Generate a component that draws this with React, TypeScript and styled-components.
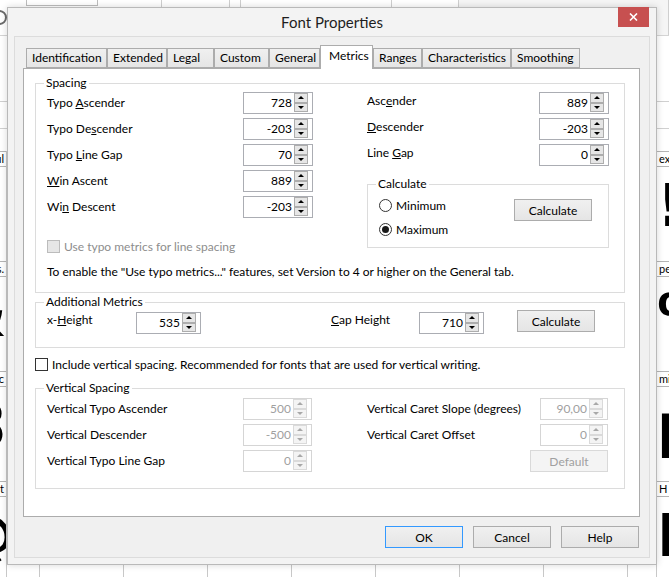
import React from 'react';
import styled, { createGlobalStyle } from 'styled-components';

const UI_FONT = 'Lato, "Noto Sans", "Liberation Sans", sans-serif';

const GlobalStyle = createGlobalStyle`
  html, body { margin: 0; padding: 0; background: #fff; }
  body { font-family: ${UI_FONT}; font-size: 12px; color: #000; }
  *, *::before, *::after { box-sizing: border-box; }
`;

/* ---------- host application behind the dialog ---------- */

const Desktop = styled.div`
  position: relative;
  width: 669px;
  height: 577px;
  overflow: hidden;
  background: #fff;
`;

const HostApp = styled.div`
  display: flex;
  flex-direction: column;
  height: 100%;
`;

const HostToolbar = styled.div`
  display: flex;
  flex: none;
  height: 36px;
  border-bottom: 1px solid #d4d4d4;
`;

const ToolSegment = styled.div<{ $w?: number; $shaded?: boolean }>`
  ${(p) => (p.$w ? `width: ${p.$w}px; flex: none;` : 'flex: 1;')}
  display: flex;
  align-items: flex-start;
  border-right: 1px solid #cfcfcf;
  background: ${(p) => (p.$shaded ? '#f5f5f5' : '#fff')};
`;

const RoundTool = styled.span`
  width: 15px;
  height: 15px;
  margin: 10px 0 0 -8px;
  border: 2px solid #6b6b6b;
  border-radius: 50%;
`;

const SearchBox = styled.span`
  width: 72px;
  height: 6px;
  margin-left: 19px;
  border: 1px solid #bdbdbd;
  border-top: none;
`;

const FilterBand = styled.div`
  flex: none;
  height: 115px;
  padding-top: 65px;
`;

const FilterRow = styled.div`
  height: 28px;
  border-top: 1px solid #d0d0d0;
  border-bottom: 1px solid #d0d0d0;
`;

const GlyphGrid = styled.div`
  display: grid;
  grid-template-columns: 51px 33px repeat(7, 84px) 29px 60px;
  grid-auto-rows: 110px;
  margin-left: -44px;
`;

type Align = 'left' | 'center' | 'right';

const GlyphCell = styled.div`
  display: flex;
  flex-direction: column;
  border-right: 1px solid #c8c8c8;
  overflow: hidden;
`;

const CellLabel = styled.div<{ $align: Align }>`
  height: 16px;
  padding: 0 2px;
  border-top: 1px solid #b5b5b5;
  border-bottom: 1px solid #b5b5b5;
  font-size: 11px;
  line-height: 14px;
  white-space: nowrap;
  overflow: hidden;
  text-align: ${(p) => p.$align};
`;

const GlyphArt = styled.div<{ $align: Align }>`
  padding-top: 10px;
  font-family: 'DejaVu Sans', sans-serif;
  font-weight: 700;
  font-size: 58px;
  line-height: 1;
  white-space: nowrap;
  text-align: ${(p) => p.$align};
`;

// only the outer columns peek out from behind the dialog
const GLYPH_ROWS: { left: [string, string]; right: [string, string] }[] = [
  { left: ['ul', ''], right: ['exclam', '!'] },
  { left: ['chars.', '&'], right: ['percent', '%'] },
  { left: ['sec', '8'], right: ['micro', 'µ'] },
  { left: ['t', '@'], right: ['H', 'H'] },
];

const GRID_COLUMNS = 11;

const HostBackdrop = () => (
  <HostApp>
    <HostToolbar>
      <ToolSegment $w={162}>
        <RoundTool />
        <SearchBox />
      </ToolSegment>
      <ToolSegment $w={68} />
      <ToolSegment $w={11} />
      <ToolSegment $w={151} />
      <ToolSegment $w={67} />
      <ToolSegment $shaded />
    </HostToolbar>
    <FilterBand>
      <FilterRow />
    </FilterBand>
    <GlyphGrid>
      {GLYPH_ROWS.map((row, r) =>
        Array.from({ length: GRID_COLUMNS }, (_, c) => {
          const cell = c === 0 ? row.left : c === GRID_COLUMNS - 1 ? row.right : ['', ''];
          const align: Align = c === 0 ? 'right' : c === GRID_COLUMNS - 1 ? 'left' : 'center';
          return (
            <GlyphCell key={`${r}-${c}`}>
              <CellLabel $align={align}>{cell[0]}</CellLabel>
              <GlyphArt $align={align}>{cell[1]}</GlyphArt>
            </GlyphCell>
          );
        }),
      )}
    </GlyphGrid>
  </HostApp>
);

/* ---------- dialog window ---------- */

const DialogWindow = styled.section`
  position: absolute;
  left: 7px;
  top: 7px;
  width: 650px;
  height: 558px;
  display: flex;
  flex-direction: column;
  background: #f3f3f3;
  border: 1px solid #b9b9b9;
  box-shadow: 0 0 7px rgba(0, 0, 0, 0.16);
`;

const TitleBar = styled.header`
  flex: none;
  height: 28px;
  display: grid;
  grid-template-columns: 1fr auto 1fr;
  align-items: start;
`;

const Title = styled.h1`
  grid-column: 2;
  margin: 0;
  font-size: 15px;
  font-weight: 400;
  line-height: 28px;
  color: #1e1e1e;
`;

const CloseButton = styled.button`
  grid-column: 3;
  justify-self: end;
  width: 31px;
  height: 20px;
  margin: -1px 7px 0 0;
  padding: 0;
  border: 0;
  display: flex;
  align-items: center;
  justify-content: center;
  background: #c75050;
`;

const ClientArea = styled.div`
  flex: 1;
  display: flex;
  flex-direction: column;
  margin: 0 6px 6px 6px;
  padding: 8px 9px 9px 8px;
  border: 1px solid #dcdcdc;
  background: #f0f0f0;
`;

const TabStrip = styled.div`
  flex: none;
  height: 23px;
  display: flex;
  align-items: flex-end;
  padding-left: 3px;
`;

const Tab = styled.div<{ $w: number; $active?: boolean }>`
  position: relative;
  width: ${(p) => p.$w}px;
  height: ${(p) => (p.$active ? 24 : 20)}px;
  margin-bottom: ${(p) => (p.$active ? -1 : 0)}px;
  z-index: ${(p) => (p.$active ? 1 : 0)};
  padding: ${(p) => (p.$active ? '2px 0 0 8px' : '1px 0 0 5px')};
  border: 1px solid #acacac;
  border-bottom: ${(p) => (p.$active ? 'none' : '1px solid #acacac')};
  background: ${(p) => (p.$active ? '#fff' : 'linear-gradient(#f0f0f0, #e5e5e5)')};
  line-height: 16px;
  white-space: nowrap;
`;

const TabPanel = styled.div`
  flex: 1;
  display: flex;
  flex-direction: column;
  align-items: flex-start;
  padding: 6px 0 0 11px;
  border: 1px solid #acacac;
  background: #fff;
`;

const GroupBox = styled.fieldset<{ $w: number; $gapTop?: number }>`
  width: ${(p) => p.$w}px;
  min-inline-size: 0;
  margin: ${(p) => p.$gapTop ?? 0}px 0 0 0;
  padding: 0;
  border: 1px solid #dcdcdc;
`;

const GroupTitle = styled.legend`
  margin-left: 8px;
  padding: 0 2px;
  line-height: 16px;
`;

const SpacingBody = styled.div`
  padding: 1px 15px 12px 11px;
`;

const SpacingColumns = styled.div`
  display: grid;
  grid-template-columns: 266px 242px;
  column-gap: 54px;
  align-items: start;
`;

const FieldColumn = styled.div`
  display: flex;
  flex-direction: column;
  gap: 4px;
`;

const MetricRow = styled.div<{ $raised?: boolean }>`
  height: 22px;
  display: flex;
  align-items: ${(p) => (p.$raised ? 'flex-start' : 'center')};
  justify-content: space-between;
`;

const MetricLabel = styled.span<{ $raised?: boolean }>`
  line-height: 16px;
  margin-top: ${(p) => (p.$raised ? 1 : 0)}px;
`;

const Note = styled.p`
  margin: 11px 0 0;
  line-height: 16px;
`;

const CheckRow = styled.label<{ $gapTop: number; $disabled?: boolean }>`
  display: flex;
  align-items: center;
  gap: 4px;
  height: 13px;
  margin-top: ${(p) => p.$gapTop}px;
  color: ${(p) => (p.$disabled ? '#8d8d8d' : '#000')};
  white-space: nowrap;
`;

const CheckSquare = styled.span<{ $disabled?: boolean }>`
  flex: none;
  width: 13px;
  height: 13px;
  border: 1px solid ${(p) => (p.$disabled ? '#bcbcbc' : '#333')};
  background: ${(p) => (p.$disabled ? '#e6e6e6' : '#fff')};
`;

const CalcBody = styled.div`
  display: flex;
  justify-content: space-between;
  align-items: flex-start;
  padding: 5px 16px 10px 11px;
`;

const RadioList = styled.div`
  display: flex;
  flex-direction: column;
  gap: 8px;
`;

const RadioRow = styled.label`
  display: flex;
  align-items: center;
  gap: 4px;
  height: 16px;
`;

const RadioDot = styled.span<{ $checked?: boolean }>`
  flex: none;
  width: 13px;
  height: 13px;
  border: 1px solid #333;
  border-radius: 50%;
  background: #fff;
  display: flex;
  align-items: center;
  justify-content: center;

  &::after {
    content: '';
    width: 7px;
    height: 7px;
    border-radius: 50%;
    background: ${(p) => (p.$checked ? '#1a1a1a' : 'transparent')};
  }
`;

const CalcButtonSlot = styled.div`
  padding-top: 2px;
`;

const AdditionalBody = styled.div`
  display: flex;
  align-items: flex-start;
  padding: 2px 0 13px 11px;
`;

const InlineLabel = styled.span<{ $w: number; $gapLeft?: number }>`
  width: ${(p) => p.$w}px;
  margin-left: ${(p) => p.$gapLeft ?? 0}px;
  line-height: 16px;
`;

const VerticalBody = styled.div`
  display: grid;
  grid-template-columns: 265px 241px;
  column-gap: 55px;
  padding: 2px 15px 16px 11px;
`;

const ButtonSlot = styled.div`
  height: 22px;
  display: flex;
  justify-content: flex-end;
`;

const ButtonRow = styled.div`
  flex: none;
  display: flex;
  justify-content: flex-end;
  gap: 10px;
  margin-top: 9px;
  padding-right: 1px;
`;

const PushButton = styled.button<{ $w: number; $default?: boolean; $gapLeft?: number; $lift?: number }>`
  width: ${(p) => p.$w}px;
  height: 22px;
  margin: ${(p) => -(p.$lift ?? 0)}px 0 0 ${(p) => p.$gapLeft ?? 0}px;
  padding: 0;
  font: inherit;
  color: #000;
  border: 1px solid ${(p) => (p.$default ? '#3399ff' : '#acacac')};
  background: linear-gradient(#f0f0f0, #e5e5e5);

  &:disabled {
    color: #a0a0a0;
    border-color: #d9d9d9;
    background: #f4f4f4;
  }
`;

const FieldBox = styled.span<{ $w: number; $disabled?: boolean }>`
  flex: none;
  display: inline-flex;
  width: ${(p) => p.$w}px;
  height: 22px;
  border: 1px solid ${(p) => (p.$disabled ? '#d5d5d5' : '#abadb3')};
  background: #fff;
`;

const FieldValue = styled.span<{ $disabled?: boolean }>`
  flex: 1;
  padding-right: 2px;
  text-align: right;
  line-height: 20px;
  color: ${(p) => (p.$disabled ? '#a0a0a0' : '#000')};
`;

const Spinner = styled.span`
  display: flex;
  flex-direction: column;
  width: 14px;
  margin: 0 4px 1px 0;
`;

const SpinButton = styled.span<{ $disabled?: boolean }>`
  flex: 1;
  display: flex;
  align-items: center;
  justify-content: center;
  border: 1px solid ${(p) => (p.$disabled ? '#dadada' : '#adadad')};
  background: ${(p) => (p.$disabled ? '#f4f4f4' : '#e6e6e6')};
`;

const Arrow = styled.span<{ $dir: 'up' | 'down'; $disabled?: boolean }>`
  width: 0;
  height: 0;
  border-left: 3px solid transparent;
  border-right: 3px solid transparent;
  ${(p) => (p.$dir === 'up' ? 'border-bottom' : 'border-top')}: 3px solid
    ${(p) => (p.$disabled ? '#a8a8a8' : '#000')};
`;

/* ---------- helpers ---------- */

// Win32 style label: "&" marks the access key letter
const AccessText = ({ text }: { text: string }) => {
  const i = text.indexOf('&');
  if (i < 0) return <>{text}</>;
  return (
    <>
      {text.slice(0, i)}
      <u>{text[i + 1]}</u>
      {text.slice(i + 2)}
    </>
  );
};

type NumberFieldProps = { value: string; width: number; disabled?: boolean };

const NumberField = ({ value, width, disabled }: NumberFieldProps) => (
  <FieldBox $w={width} $disabled={disabled}>
    <FieldValue $disabled={disabled}>{value}</FieldValue>
    <Spinner>
      <SpinButton $disabled={disabled}>
        <Arrow $dir="up" $disabled={disabled} />
      </SpinButton>
      <SpinButton $disabled={disabled}>
        <Arrow $dir="down" $disabled={disabled} />
      </SpinButton>
    </Spinner>
  </FieldBox>
);

type Metric = { label: string; value: string };

const TABS = [
  { name: 'Identification', width: 81 },
  { name: 'Extended', width: 60 },
  { name: 'Legal', width: 47 },
  { name: 'Custom', width: 55 },
  { name: 'General', width: 51 },
  { name: 'Metrics', width: 53, active: true },
  { name: 'Ranges', width: 49 },
  { name: 'Characteristics', width: 89 },
  { name: 'Smoothing', width: 69 },
];

const SPACING_LEFT: Metric[] = [
  { label: 'Typo &Ascender', value: '728' },
  { label: 'Typo De&scender', value: '-203' },
  { label: 'Typo &Line Gap', value: '70' },
  { label: '&Win Ascent', value: '889' },
  { label: 'Wi&n Descent', value: '-203' },
];

const SPACING_RIGHT: Metric[] = [
  { label: 'Asc&ender', value: '889' },
  { label: '&Descender', value: '-203' },
  { label: 'Line &Gap', value: '0' },
];

const VERTICAL_LEFT: Metric[] = [
  { label: 'Vertical Typo Ascender', value: '500' },
  { label: 'Vertical Descender', value: '-500' },
  { label: 'Vertical Typo Line Gap', value: '0' },
];

const VERTICAL_RIGHT: Metric[] = [
  { label: 'Vertical Caret Slope (degrees)', value: '90,00' },
  { label: 'Vertical Caret Offset', value: '0' },
];

type MetricRowsProps = { items: Metric[]; width: number; disabled?: boolean; raised?: boolean };

const MetricRows = ({ items, width, disabled, raised }: MetricRowsProps) => (
  <>
    {items.map((m) => (
      <MetricRow key={m.label} $raised={raised}>
        <MetricLabel $raised={raised}>
          <AccessText text={m.label} />
        </MetricLabel>
        <NumberField value={m.value} width={width} disabled={disabled} />
      </MetricRow>
    ))}
  </>
);

/* ---------- page ---------- */

const App = () => (
  <>
    <GlobalStyle />
    <Desktop>
      <HostBackdrop />
      <DialogWindow>
        <TitleBar>
          <Title>Font Properties</Title>
          <CloseButton aria-label="Close">
            <svg width="9" height="8" viewBox="0 0 9 8">
              <path d="M1 0.5 L8 7.5 M8 0.5 L1 7.5" stroke="#fff" strokeWidth="1.6" />
            </svg>
          </CloseButton>
        </TitleBar>

        <ClientArea>
          <TabStrip>
            {TABS.map((t) => (
              <Tab key={t.name} $w={t.width} $active={t.active}>
                {t.name}
              </Tab>
            ))}
          </TabStrip>

          <TabPanel>
            <GroupBox $w={590}>
              <GroupTitle>Spacing</GroupTitle>
              <SpacingBody>
                <SpacingColumns>
                  <FieldColumn>
                    <MetricRows items={SPACING_LEFT} width={70} />
                    <CheckRow $gapTop={18} $disabled>
                      <CheckSquare $disabled />
                      Use typo metrics for line spacing
                    </CheckRow>
                  </FieldColumn>
                  <FieldColumn>
                    <MetricRows items={SPACING_RIGHT} width={70} raised />
                    <GroupBox $w={242} $gapTop={6}>
                      <GroupTitle>Calculate</GroupTitle>
                      <CalcBody>
                        <RadioList>
                          <RadioRow>
                            <RadioDot />
                            Minimum
                          </RadioRow>
                          <RadioRow>
                            <RadioDot $checked />
                            Maximum
                          </RadioRow>
                        </RadioList>
                        <CalcButtonSlot>
                          <PushButton $w={78}>Calculate</PushButton>
                        </CalcButtonSlot>
                      </CalcBody>
                    </GroupBox>
                  </FieldColumn>
                </SpacingColumns>
                <Note>
                  To enable the "Use typo metrics..." features, set Version to 4 or higher on the General tab.
                </Note>
              </SpacingBody>
            </GroupBox>

            <GroupBox $w={590} $gapTop={1}>
              <GroupTitle>Additional Metrics</GroupTitle>
              <AdditionalBody>
                <InlineLabel $w={89}>
                  <AccessText text="x-&Height" />
                </InlineLabel>
                <NumberField value="535" width={65} />
                <InlineLabel $w={88} $gapLeft={130}>
                  <AccessText text="&Cap Height" />
                </InlineLabel>
                <NumberField value="710" width={65} />
                <PushButton $w={78} $gapLeft={33} $lift={2}>
                  Calculate
                </PushButton>
              </AdditionalBody>
            </GroupBox>

            <CheckRow $gapTop={10}>
              <CheckSquare />
              Include vertical spacing. Recommended for fonts that are used for vertical writing.
            </CheckRow>

            <GroupBox $w={590} $gapTop={9}>
              <GroupTitle>Vertical Spacing</GroupTitle>
              <VerticalBody>
                <FieldColumn>
                  <MetricRows items={VERTICAL_LEFT} width={69} disabled />
                </FieldColumn>
                <FieldColumn>
                  <MetricRows items={VERTICAL_RIGHT} width={68} disabled />
                  <ButtonSlot>
                    <PushButton $w={78} disabled>
                      Default
                    </PushButton>
                  </ButtonSlot>
                </FieldColumn>
              </VerticalBody>
            </GroupBox>
          </TabPanel>

          <ButtonRow>
            <PushButton $w={78} $default>
              OK
            </PushButton>
            <PushButton $w={78}>Cancel</PushButton>
            <PushButton $w={78}>Help</PushButton>
          </ButtonRow>
        </ClientArea>
      </DialogWindow>
    </Desktop>
  </>
);

export default App;
